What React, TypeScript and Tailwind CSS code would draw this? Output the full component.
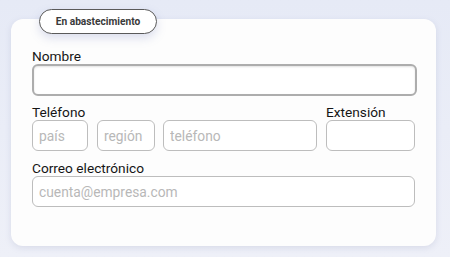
import React from "react";

const inputBase =
  "h-[31px] rounded-[6px] border border-[#bdbdbd] bg-white px-[6px] text-[13.8px] text-[#333] placeholder:text-[#b8b8b8] outline-none";

const labelCls = "text-[13.7px] leading-[16px] text-[#151515]";

export default function App() {
  return (
    <div
      className="w-[450px] h-[257px] overflow-hidden bg-gradient-to-b from-[#e6eaf6] to-[#eef0f8] pl-[11px] pt-[19px]"
      style={{ fontFamily: "Roboto, 'Liberation Sans', sans-serif" }}
    >
      <div className="relative w-[425px] h-[227px] rounded-[12px] bg-[#fdfdfd] shadow-[0_2px_6px_rgba(120,130,170,0.18)] pl-[21px] pr-[20px] pt-[29px]">
        <div className="absolute left-[28px] top-[-10px] h-[25px] w-[118px] rounded-full border-[1.5px] border-[#5a5a5a] bg-white shadow-[0_4px_10px_rgba(120,130,190,0.25)] flex items-center justify-center text-[10.2px] font-bold text-[#3a3a3a]">
          En abastecimiento
        </div>

        <div className="flex flex-col">
          <label className={labelCls}>Nombre</label>
          <input
            className="h-[32px] w-[385px] rounded-[6px] border-2 border-[#adadad] bg-white shadow-[inset_0_1px_2px_rgba(0,0,0,0.12)] outline-none"
            type="text"
          />
        </div>

        <div className="mt-[8px] flex gap-[9px]">
          <div className="flex flex-col">
            <label className={labelCls}>Teléfono</label>
            <div className="flex">
              <input className={inputBase + " w-[56px]"} placeholder="país" />
              <input className={inputBase + " w-[58px] ml-[9px]"} placeholder="región" />
              <input className={inputBase + " w-[154px] ml-[8px]"} placeholder="teléfono" />
            </div>
          </div>
          <div className="flex flex-col">
            <label className={labelCls}>Extensión</label>
            <input className={inputBase + " w-[89px]"} />
          </div>
        </div>

        <div className="mt-[9px] flex flex-col">
          <label className={labelCls}>Correo electrónico</label>
          <input className={inputBase + " w-[383px]"} placeholder="cuenta@empresa.com" />
        </div>
      </div>
    </div>
  );
}
